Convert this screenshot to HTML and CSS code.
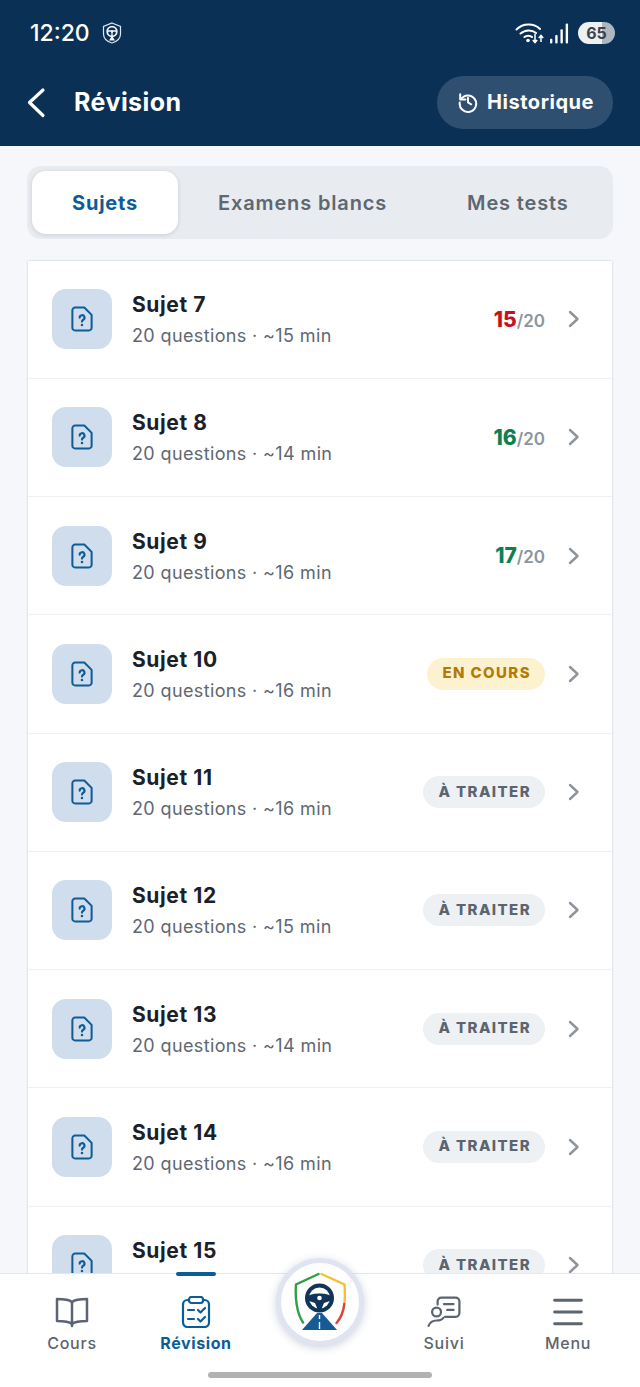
FILE: index.html
```html
<!DOCTYPE html>
<html lang="fr">
<head>
<meta charset="utf-8">
<title>Révision</title>
<link rel="stylesheet" href="styles.css">
</head>
<body>
<svg class="defs" width="0" height="0">
  <symbol id="doc" viewBox="0 0 24 28">
    <path d="M4.500 1.500H14.500L22.500 9.500V23.500A3 3 0 0 1 19.500 26.500H4.500A3 3 0 0 1 1.500 23.500V4.500A3 3 0 0 1 4.500 1.500Z" fill="none" stroke="currentColor" stroke-width="2.200" stroke-linejoin="round"/>
    <path d="M9.500 12.500A2.600 2.600 0 1 1 13.300 14.800C12.500 15.300 12 15.700 12 16.800" fill="none" stroke="currentColor" stroke-width="2.400" stroke-linecap="round"/>
    <circle cx="12" cy="20.500" r="1.400" fill="currentColor"/>
  </symbol>
  <symbol id="chev" viewBox="0 0 12 18">
    <path d="M2 2L9.500 9L2 16" fill="none" stroke="currentColor" stroke-width="2.400" stroke-linecap="round" stroke-linejoin="round"/>
  </symbol>
</svg>
<div class="app">
  <header class="top">
    <div class="status">
      <div class="status-left">
        <span class="time">12:20</span>
        <svg class="mini-logo" viewBox="0 0 20 22"><path d="M10 1L18.500 4.500V12C18.500 16.500 15 19.500 10 21C5 19.500 1.500 16.500 1.500 12V4.500Z" fill="none" stroke="#dfe6ee" stroke-width="1.200"/><circle cx="10" cy="9.500" r="4.800" fill="none" stroke="#f4f6f9" stroke-width="1.800"/><circle cx="10" cy="9.500" r="1.200" fill="#f4f6f9"/><path d="M5.500 9H14.500M10 10V14" stroke="#f4f6f9" stroke-width="1.300"/><path d="M7 18.500L9.500 14.500H10.500L13 18.500Z" fill="#f4f6f9"/></svg>
      </div>
      <div class="status-right">
        <svg class="wifi" viewBox="0 0 30 22"><path d="M1.500 7.500C8 1 19 1 25 7" fill="none" stroke="#fff" stroke-width="2.100" stroke-linecap="round"/><path d="M5.500 11.500C10 7.500 17 7.500 21 11" fill="none" stroke="#fff" stroke-width="2.100" stroke-linecap="round"/><path d="M9.500 15C11.500 13.300 15 13.300 17 15" fill="none" stroke="#fff" stroke-width="2.100" stroke-linecap="round"/><circle cx="13" cy="18.500" r="1.800" fill="#fff"/><path d="M20 12V20M17.800 18L20 20.500L22.200 18M26 20V14M23.800 16L26 13.500L28.200 16" fill="none" stroke="#fff" stroke-width="1.500"/></svg>
        <svg class="signal" viewBox="0 0 20 21"><rect x="0" y="16" width="2.500" height="5" rx="1" fill="#fff"/><rect x="5.500" y="12" width="2.500" height="9" rx="1" fill="#fff"/><rect x="11" y="6" width="2.500" height="15" rx="1" fill="#fff"/><rect x="16.500" y="0" width="2.500" height="21" rx="1" fill="#fff"/></svg>
        <div class="battery"><span>65</span></div>
      </div>
    </div>
    <div class="bar">
      <div class="bar-left">
        <svg class="back" viewBox="0 0 20 32"><path d="M17 3L3.500 15.500L17 28.500" fill="none" stroke="#fff" stroke-width="3.200" stroke-linecap="round" stroke-linejoin="round"/></svg>
        <h1 class="title">Révision</h1>
      </div>
      <button class="history">
        <svg class="history-icon" viewBox="0 0 24 24"><path d="M4.300 9A9 9 0 1 1 3 12.500" fill="none" stroke="#fff" stroke-width="2.200" stroke-linecap="round"/><path d="M3.500 3.500V9.200H9.200" fill="none" stroke="#fff" stroke-width="2.200" stroke-linecap="round" stroke-linejoin="round"/><path d="M12 7.500V12.500L15.500 14.500" fill="none" stroke="#fff" stroke-width="2.200" stroke-linecap="round" stroke-linejoin="round"/></svg>
        <span class="history-label">Historique</span>
      </button>
    </div>
  </header>

  <main class="content">
    <div class="tabs">
      <div class="tab tab-active">Sujets</div>
      <div class="tab">Examens blancs</div>
      <div class="tab">Mes tests</div>
    </div>
    <div class="list">
      <div class="row"><div class="doc"><svg class="doc-icon"><use href="#doc"/></svg></div><div class="info"><div class="name">Sujet 7</div><div class="meta">20 questions · ~15 min</div></div><div class="score"><b class="bad">15</b>/20</div><svg class="chevron"><use href="#chev"/></svg></div>
      <div class="row"><div class="doc"><svg class="doc-icon"><use href="#doc"/></svg></div><div class="info"><div class="name">Sujet 8</div><div class="meta">20 questions · ~14 min</div></div><div class="score"><b class="good">16</b>/20</div><svg class="chevron"><use href="#chev"/></svg></div>
      <div class="row"><div class="doc"><svg class="doc-icon"><use href="#doc"/></svg></div><div class="info"><div class="name">Sujet 9</div><div class="meta">20 questions · ~16 min</div></div><div class="score"><b class="good">17</b>/20</div><svg class="chevron"><use href="#chev"/></svg></div>
      <div class="row"><div class="doc"><svg class="doc-icon"><use href="#doc"/></svg></div><div class="info"><div class="name">Sujet 10</div><div class="meta">20 questions · ~16 min</div></div><div class="pill pill-progress">EN COURS</div><svg class="chevron"><use href="#chev"/></svg></div>
      <div class="row"><div class="doc"><svg class="doc-icon"><use href="#doc"/></svg></div><div class="info"><div class="name">Sujet 11</div><div class="meta">20 questions · ~16 min</div></div><div class="pill">À TRAITER</div><svg class="chevron"><use href="#chev"/></svg></div>
      <div class="row"><div class="doc"><svg class="doc-icon"><use href="#doc"/></svg></div><div class="info"><div class="name">Sujet 12</div><div class="meta">20 questions · ~15 min</div></div><div class="pill">À TRAITER</div><svg class="chevron"><use href="#chev"/></svg></div>
      <div class="row"><div class="doc"><svg class="doc-icon"><use href="#doc"/></svg></div><div class="info"><div class="name">Sujet 13</div><div class="meta">20 questions · ~14 min</div></div><div class="pill">À TRAITER</div><svg class="chevron"><use href="#chev"/></svg></div>
      <div class="row"><div class="doc"><svg class="doc-icon"><use href="#doc"/></svg></div><div class="info"><div class="name">Sujet 14</div><div class="meta">20 questions · ~16 min</div></div><div class="pill">À TRAITER</div><svg class="chevron"><use href="#chev"/></svg></div>
      <div class="row"><div class="doc"><svg class="doc-icon"><use href="#doc"/></svg></div><div class="info"><div class="name">Sujet 15</div><div class="meta">20 questions · ~16 min</div></div><div class="pill">À TRAITER</div><svg class="chevron"><use href="#chev"/></svg></div>
    </div>
  </main>

  <nav class="nav">
    <div class="nav-item">
      <svg class="nav-icon" viewBox="0 0 34 32"><path d="M17 6C14 3.500 10 3 2 3V25C9 25 14 25.500 17 28C20 25.500 25 25 32 25V3C24 3 20 3.500 17 6Z M17 6V30" fill="none" stroke="#5b6470" stroke-width="2.500" stroke-linejoin="round" stroke-linecap="round"/></svg>
      <span>Cours</span>
    </div>
    <div class="nav-item nav-active">
      <span class="nav-mark"></span>
      <svg class="nav-icon" viewBox="0 0 30 32"><rect x="2" y="4" width="26" height="27" rx="4.500" fill="none" stroke="#0b5c97" stroke-width="2.200"/><rect x="8" y="1" width="14" height="6" rx="2.500" fill="#fff" stroke="#0b5c97" stroke-width="2.200"/><path d="M7 14H13M7 23H13M17 14L19.500 16.500L24 12M17 23L19.500 25.500L24 21" fill="none" stroke="#0b5c97" stroke-width="2.200" stroke-linecap="round" stroke-linejoin="round"/></svg>
      <span>Révision</span>
    </div>
    <div class="nav-gap"></div>
    <div class="nav-item">
      <svg class="nav-icon" viewBox="0 0 32 30"><path d="M10 8V5A3.500 3.500 0 0 1 13.500 1.500H27A3.500 3.500 0 0 1 30.500 5V16A3.500 3.500 0 0 1 27 19.500H17" fill="none" stroke="#5b6470" stroke-width="2.100" stroke-linecap="round"/><path d="M16 7.500H25M19 13H25" stroke="#5b6470" stroke-width="2.100" stroke-linecap="round"/><circle cx="9" cy="15" r="4.200" fill="none" stroke="#5b6470" stroke-width="2.100"/><path d="M1.500 28C3 24 6 23 9 23C12 23 14 22.500 15.500 20.500" fill="none" stroke="#5b6470" stroke-width="2.100" stroke-linecap="round"/></svg>
      <span>Suivi</span>
    </div>
    <div class="nav-item">
      <svg class="nav-icon" viewBox="0 0 30 30"><path d="M2.500 4H27.500M2.500 15H27.500M2.500 26H27.500" stroke="#5b6470" stroke-width="2.800" stroke-linecap="round"/></svg>
      <span>Menu</span>
    </div>
    <div class="fab">
      <svg class="fab-logo" viewBox="0 0 52 60">
        <path d="M24.500 2L2 12.500C1 25 2.500 41 9 50.500" fill="none" stroke="#2f9e44" stroke-width="2.400" stroke-linecap="round"/>
        <path d="M27.500 2L50.500 12.500C51 19 51 25 50.500 31" fill="none" stroke="#f2c230" stroke-width="2.400" stroke-linecap="round"/>
        <path d="M50.300 32C49.500 39 47 46 42.500 51" fill="none" stroke="#d9453a" stroke-width="2.400" stroke-linecap="round"/>
        <circle cx="25.500" cy="26" r="14.500" fill="#0f3559"/>
        <circle cx="25.500" cy="26" r="10.500" fill="#fff"/>
        <path d="M14 24C18 20.500 33 20.500 37 24L36 29L30 31L27.500 37H23.500L21 31L15 29Z" fill="#0f3559"/>
        <circle cx="25.500" cy="26" r="2.300" fill="#fff"/>
        <path d="M23 41H28L43 58H8Z" fill="#175b95"/>
        <path d="M25.500 43V47M25.500 50V57" stroke="#fff" stroke-width="1.400"/>
      </svg>
    </div>
    <div class="home"></div>
  </nav>
</div>
</body>
</html>
```
FILE: styles.css
```css
* { box-sizing: border-box; margin: 0; padding: 0; }
html, body { width: 640px; height: 1387px; overflow: hidden; }
body { font-family: Inter, "Liberation Sans", sans-serif; background: #f5f7fa; color: #1c2127; }
.defs { position: absolute; }
.app { height: 1387px; display: flex; flex-direction: column; }

.top { flex: 0 0 146px; background: #0a3055; padding: 16px 25px 0 30px; color: #fff; }
.status { height: 34px; display: flex; justify-content: space-between; align-items: center; }
.status-left { display: flex; align-items: center; gap: 12px; }
.time { font-size: 23px; font-weight: 500; }
.mini-logo { width: 20px; height: 22px; }
.status-right { display: flex; align-items: center; }
.wifi { width: 30px; height: 22px; margin-right: 5px; }
.signal { width: 19px; height: 21px; margin-right: 9px; }
.battery { width: 37px; height: 22px; border-radius: 11px; background: linear-gradient(90deg, #eef1f4 65%, #aeb6bf 65%); color: #3d434b; font-size: 16px; font-weight: 700; display: flex; align-items: center; justify-content: center; }

.bar { margin-top: 26px; height: 53px; display: flex; justify-content: space-between; align-items: center; margin-left: -4px; margin-right: 2px; }
.bar-left { display: flex; align-items: center; }
.back { width: 20px; height: 32px; margin-right: 28px; }
.title { font-size: 25px; font-weight: 700; letter-spacing: .45px; color: #fff; padding-bottom: 2px; }
.history { width: 176px; height: 53px; border: 0; border-radius: 27px; background: #2e4f70; color: #fff; font: inherit; font-size: 20px; font-weight: 700; letter-spacing: .55px; display: flex; align-items: center; justify-content: center; gap: 8px; padding-left: 1px; }
.history-icon { width: 22px; height: 22px; margin-bottom: 1px; }
.history-label { padding-bottom: 2px; }

.content { flex: 1 1 0; min-height: 0; overflow: hidden; padding: 20px 28px 0 28px; }
.tabs { margin: 0 -1px; height: 73px; padding: 5px; border-radius: 14px; background: #e8ebf0; display: flex; }
.tab { flex: 1 1 auto; padding: 0 40px; border-radius: 14px; display: flex; align-items: center; justify-content: center; font-size: 20px; font-weight: 600; letter-spacing: .85px; color: #5f6771; white-space: nowrap; }
.tab-active { background: #fff; color: #0b5c97; font-weight: 700; letter-spacing: .8px; box-shadow: 0 1px 4px rgba(30, 40, 60, .14); }

.list { margin-top: 21.500px; background: #fff; box-shadow: 0 0 2px rgba(60, 75, 100, .28); }
.row { height: 118.250px; padding: 0 32px 0 24px; display: flex; align-items: center; border-bottom: 1px solid #eff1f4; }
.doc { flex: 0 0 60px; height: 60px; border-radius: 14px; background: #cfdded; display: flex; align-items: center; justify-content: center; color: #0f5c96; }
.doc-icon { width: 22px; height: 26px; }
.info { flex: 1 1 auto; margin-left: 20px; padding-top: 2px; }
.name { font-size: 21px; font-weight: 700; letter-spacing: .6px; line-height: 26px; color: #1c2127; }
.meta { margin-top: 6px; font-size: 18px; font-weight: 400; letter-spacing: .37px; line-height: 24px; color: #5f6771; }
.score { font-size: 17px; font-weight: 600; color: #8d949c; }
.score b { font-size: 21px; font-weight: 800; }
.bad { color: #c8101e; }
.good { color: #0e8050; }
.pill { height: 32px; padding: 0 14px 2px 15px; border-radius: 16px; background: #eef1f4; color: #5b6470; font-size: 15px; font-weight: 800; letter-spacing: 1.400px; display: flex; align-items: center; white-space: nowrap; }
.pill-progress { background: #fdf2d0; color: #b57a06; }
.chevron { flex: 0 0 12px; width: 12px; height: 18px; margin-left: 23px; color: #8d949c; }

.nav { flex: 0 0 114px; position: relative; background: #fff; border-top: 1px solid #e4e7eb; padding: 0 10px; display: flex; align-items: flex-start; }
.nav-item { position: relative; flex: 0 0 124px; height: 80px; display: flex; flex-direction: column; align-items: center; padding-top: 22px; font-size: 16px; font-weight: 500; letter-spacing: .75px; color: #5b6470; }
.nav-item span:last-child { margin-top: 4px; line-height: 22px; }
.nav-icon { width: 34px; height: 32px; }
.nav-active { color: #0b5c97; font-weight: 700; letter-spacing: .6px; }
.nav-mark { position: absolute; top: -2px; left: 42px; width: 40px; height: 4px; border-radius: 2px; background: #0b5c97; }
.nav-gap { flex: 0 0 124px; }
.fab { position: absolute; top: -16px; left: 276px; width: 88px; height: 88px; border-radius: 50%; background: #fff; border: 5px solid #dfe4f0; box-shadow: 0 2px 8px rgba(90, 105, 150, .3); display: flex; align-items: center; justify-content: center; }
.fab-logo { width: 52px; height: 60px; }
.home { position: absolute; left: 208px; top: 98px; width: 224px; height: 6px; border-radius: 3px; background: #b2b2b2; }
```
